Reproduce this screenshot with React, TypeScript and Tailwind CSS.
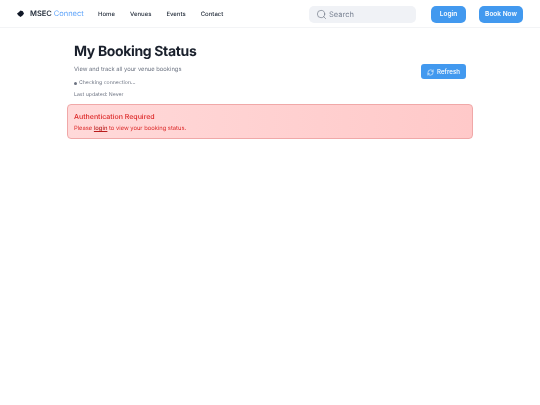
import { RefreshCw, Search } from "lucide-react";

export default function App() {
  return (
    <div className="min-h-[405px] w-[540px] bg-white font-['Inter',sans-serif] antialiased [text-rendering:geometricPrecision]">
      <header className="flex h-[28px] items-center border-b border-[#f3f4f6] pl-[17px] pr-[17px] pt-[1px]">
        <div className="flex w-[81px] shrink-0 items-center will-change-transform">
          <svg width="7" height="7" viewBox="0 0 12 12" className="mr-[6px]">
            <path d="M6 1 L10 2 L12 6 L10 9 L6 12 L2 9 L0 6 L3 4 Z" fill="#111827" />
          </svg>
          <span className="text-[7.5px] font-semibold whitespace-nowrap text-[#1f2937]">
            MSEC <span className="font-normal text-[#60a5fa]">Connect</span>
          </span>
        </div>
        <nav className="flex gap-[15px] text-[6px] font-medium text-[#1f2937] will-change-transform">
          <span>Home</span>
          <span>Venues</span>
          <span>Events</span>
          <span>Contact</span>
        </nav>
        <div className="ml-auto flex items-center will-change-transform">
          <div className="flex h-[17px] w-[107px] items-center gap-[2px] rounded-[5px] bg-[#f0f2f6] pl-[7px]">
            <Search size={11} className="text-[#6b7280]" strokeWidth={1.4} />
            <span className="text-[7.5px] text-[#7b8494]">Search</span>
          </div>
          <button className="ml-[15px] h-[17px] w-[35px] rounded-[5px] bg-[#4299ef] text-[6.5px] font-semibold text-white">
            Login
          </button>
          <button className="ml-[13px] h-[17px] w-[44px] rounded-[5px] bg-[#4299ef] text-[6.5px] font-semibold text-white">
            Book Now
          </button>
        </div>
      </header>
      <main className="mx-[67px] pt-[15px]">
        <div className="flex items-center justify-between px-[7px]">
          <div className="will-change-transform">
            <h1 className="text-[14px] leading-[18px] font-bold tracking-[-0.35px] text-[#1a202c]">My Booking Status</h1>
            <p className="mt-[5px] text-[5.8px] leading-[8px] text-[#6b7280]">View and track all your venue bookings</p>
            <div className="mt-[6px] flex items-center gap-[2px]">
              <span className="h-[3px] w-[3px] rounded-full bg-[#6b7280]" />
              <span className="text-[5.2px] leading-[7px] text-[#6b7280]">Checking connection...</span>
            </div>
            <p className="mt-[5px] text-[5.2px] leading-[7px] text-[#6b7280]">Last updated: Never</p>
          </div>
          <button className="flex h-[15px] w-[45px] items-center justify-center gap-[3px] rounded-[3px] bg-[#4299ef] pt-[1px] text-[6.2px] font-medium text-white will-change-transform">
            <RefreshCw size={7} />
            Refresh
          </button>
        </div>
        <div className="mt-[5px] h-[35px] w-[406px] rounded-[4px] border border-[#f0a8a8] bg-gradient-to-r from-[#ffd9d9] to-[#ffc9c9] px-[6px] pt-[7px]">
          <div className="will-change-transform">
            <p className="text-[7px] leading-[10px] font-medium text-[#dc2626]">Authentication Required</p>
            <p className="mt-[3px] text-[5.8px] leading-[8px] text-[#dc2626]">
              Please <span className="font-medium text-[#b91c1c] underline">login</span> to view your booking status.
            </p>
          </div>
        </div>
      </main>
    </div>
  );
}
